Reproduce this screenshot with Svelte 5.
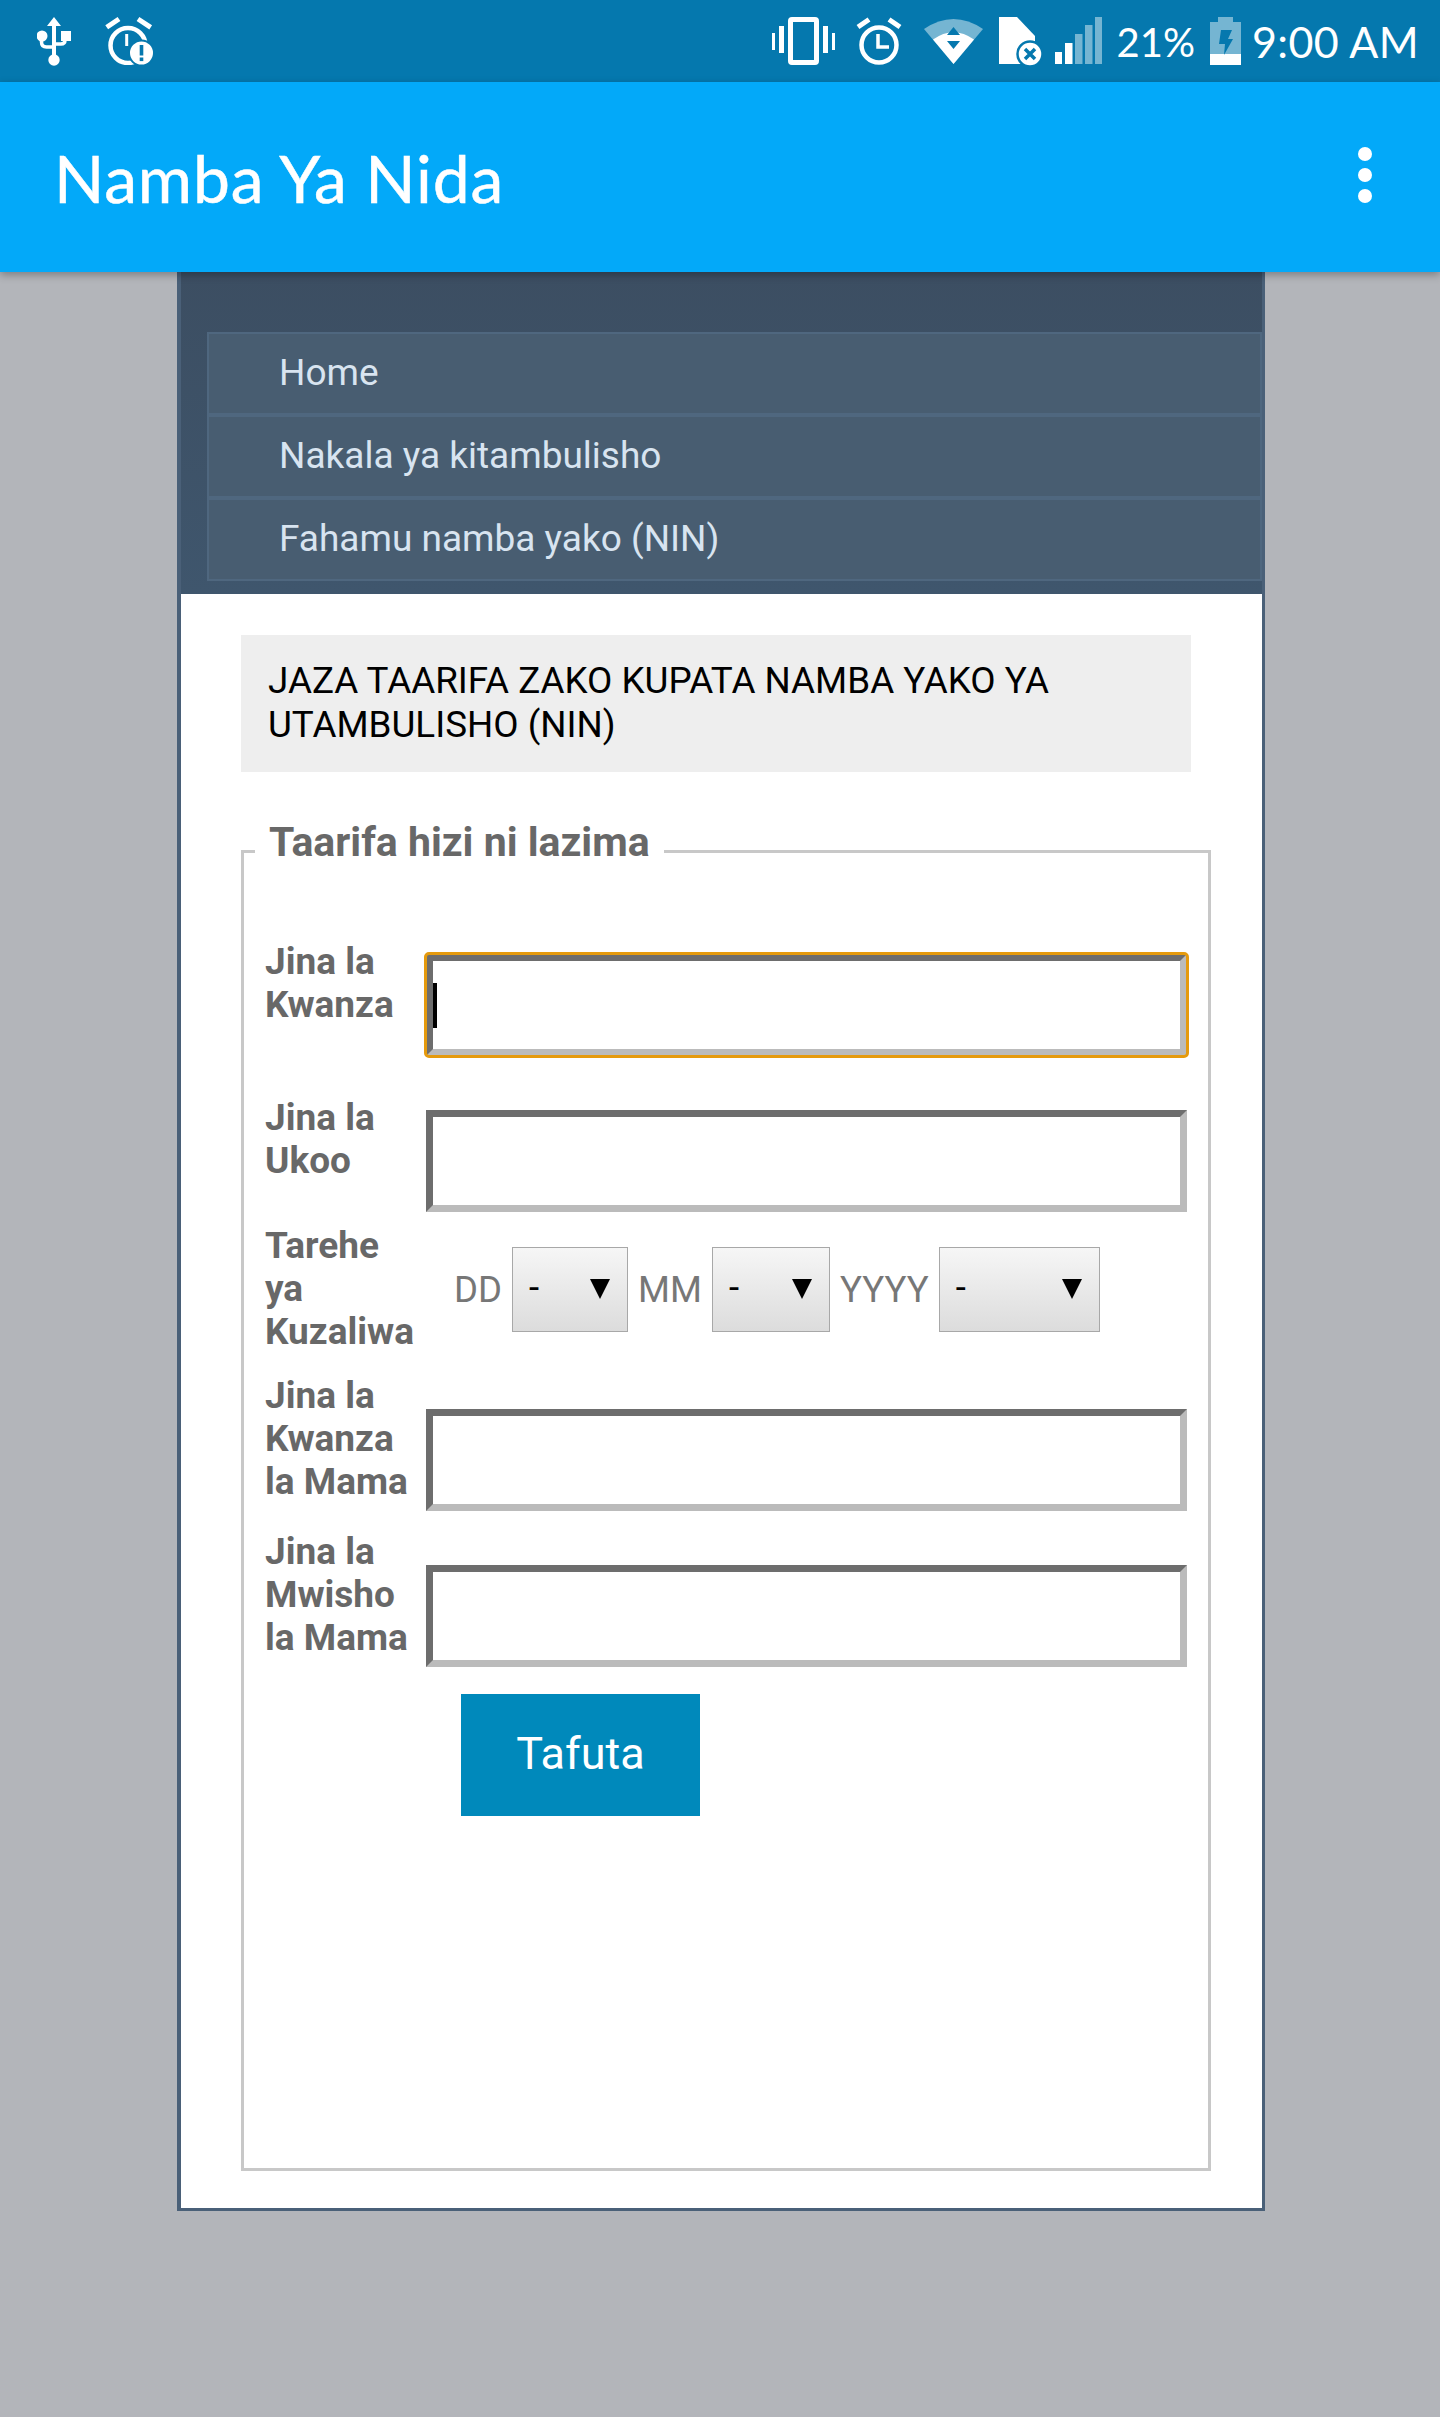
<script>
  const navItems = ["Home", "Nakala ya kitambulisho", "Fahamu namba yako (NIN)"];
  const dateParts = [
    { label: "DD", width: 116 },
    { label: "MM", width: 118 },
    { label: "YYYY", width: 161 }
  ];
</script>

<div class="statusbar">
  <svg class="usb" width="34" height="49" viewBox="0 0 34 49">
    <path d="M17 0l7 9h-5v29h-4V9h-5z" fill="#fff" />
    <path d="M4.5 20v5q0 5 5 5H17M28 24v-1q0 4-4 4h-7" fill="none" stroke="#fff" stroke-width="3.5" />
    <circle cx="5" cy="19" r="5.5" fill="#fff" />
    <rect x="24" y="14" width="10" height="10" fill="#fff" />
    <circle cx="17" cy="43" r="5.7" fill="#fff" />
  </svg>
  <svg class="alarm-alert" width="49" height="49" viewBox="0 0 49 49">
    <path d="M2.700 11.300L15 3M34 3l12.700 8.300" stroke="#fff" stroke-width="5" fill="none" />
    <circle cx="24" cy="29.500" r="17.500" stroke="#fff" stroke-width="4.500" fill="none" />
    <path d="M22.700 18v12" stroke="#fff" stroke-width="3" />
    <circle cx="37.500" cy="37" r="12.500" fill="#fff" stroke="#0578ae" stroke-width="2" />
    <rect x="35.700" y="29" width="3.600" height="10.500" fill="#0578ae" />
    <rect x="35.700" y="41.500" width="3.600" height="3.600" fill="#0578ae" />
  </svg>

  <div class="status-right">
    <svg class="vibrate" width="63" height="48" viewBox="0 0 63 48">
      <rect x="18.500" y="2.500" width="26" height="43" rx="1.500" fill="none" stroke="#fff" stroke-width="5" />
      <path d="M0 16h3v17H0zM7 9h5v27H7zM51 9h5v27h-5zM60 16h3v17h-3z" fill="#fff" />
    </svg>
    <svg class="alarm" width="48" height="48" viewBox="0 0 48 48">
      <path d="M3 10L14 2.500M34 2.500L45 10" stroke="#fff" stroke-width="5" fill="none" />
      <circle cx="24" cy="28" r="17.500" stroke="#fff" stroke-width="4.500" fill="none" />
      <path d="M23 17v13h11" stroke="#fff" stroke-width="3.500" fill="none" />
    </svg>
    <svg class="wifi" width="59" height="47" viewBox="0 0 59 47">
      <path d="M0 12Q29.500-8 59 12L29.500 47z" fill="#fff" opacity=".45" />
      <path d="M9 22.500Q29.500 8 50 22.500L29.500 47z" fill="#fff" />
      <path d="M29.500 10l6.500 8H23zM23 24h13l-6.500 8z" fill="#0578ae" />
    </svg>
    <svg class="sim" width="45" height="49" viewBox="0 0 45 49">
      <path d="M0 0H18L36 19V47H0z" fill="#fff" />
      <circle cx="31" cy="37" r="12.500" fill="#fff" stroke="#0578ae" stroke-width="2.500" />
      <path d="M26 32l10 10M36 32L26 42" stroke="#0578ae" stroke-width="3.500" />
    </svg>
    <svg class="signal" width="47" height="47" viewBox="0 0 47 47">
      <path d="M0 35h7v12H0zM10 26h7.500v21H10z" fill="#fff" />
      <path d="M20 17h7.500v30H20zM30 8h7.500v39H30zM40 0h7v47h-7z" fill="#fff" opacity=".45" />
    </svg>
    <span class="percent">21%</span>
    <svg class="battery" width="31" height="48" viewBox="0 0 31 48">
      <path d="M8 0h15v5h8v32H0V5h8z" fill="#fff" opacity=".45" />
      <path d="M0 37h31v11H0z" fill="#fff" />
      <path d="M11 13h11l-4 9h5l-9 16 1-11H9z" fill="#0578ae" />
    </svg>
    <span class="time">9:00 AM</span>
  </div>
</div>

<header class="appbar">
  <h1>Namba Ya Nida</h1>
  <div class="menu"><i></i><i></i><i></i></div>
</header>

<main class="wrapper">
  <nav>
    {#each navItems as item}
      <a href="#top">{item}</a>
    {/each}
  </nav>

  <div class="content">
    <div class="notice">JAZA TAARIFA ZAKO KUPATA NAMBA YAKO YA UTAMBULISHO (NIN)</div>

    <fieldset>
      <legend>Taarifa hizi ni lazima</legend>
      <div class="form">
        <label for="f1">Jina la Kwanza</label>
        <div class="field">
          <input id="f1" class="focused" type="text" />
          <span class="caret"></span>
        </div>

        <label for="f2">Jina la Ukoo</label>
        <div class="field"><input id="f2" type="text" /></div>

        <label for="d1">Tarehe ya Kuzaliwa</label>
        <div class="date">
          {#each dateParts as part}
            <span>{part.label}</span>
            <div class="select" style="width: {part.width}px">
              -<b></b>
            </div>
          {/each}
        </div>

        <label for="f3">Jina la Kwanza la Mama</label>
        <div class="field tall"><input id="f3" type="text" /></div>

        <label for="f4">Jina la Mwisho la Mama</label>
        <div class="field tall"><input id="f4" type="text" /></div>
      </div>
      <button type="button">Tafuta</button>
    </fieldset>
  </div>
</main>

<style>
  :global(body) {
    background: #b3b5ba;
    font-family: Roboto, "Liberation Sans", sans-serif;
  }

  .statusbar {
    height: 82px;
    background: #0578ae;
    display: flex;
    align-items: flex-start;
    padding: 17px 21px 0 37px;
    box-sizing: border-box;
  }

  .alarm-alert {
    margin-left: 33px;
    margin-top: -1px;
  }

  .status-right {
    margin-left: auto;
    display: flex;
    align-items: flex-start;
    color: #fff;
    font-family: Lato, sans-serif;
    font-size: 43px;
    line-height: 48px;
  }

  .alarm {
    margin-left: 20px;
  }

  .wifi {
    margin-left: 21px;
  }

  .sim {
    margin-left: 16px;
  }

  .signal {
    margin-left: 11px;
  }

  .percent {
    margin-left: 15px;
    margin-top: 1px;
    font-size: 40px;
  }

  .battery {
    margin-left: 15px;
  }

  .time {
    margin-left: 11px;
    margin-top: 1px;
    letter-spacing: 0.4px;
  }

  .appbar {
    position: relative;
    z-index: 2;
    height: 190px;
    background: #03a9f9;
    box-shadow: 0 3px 8px rgba(0, 0, 0, 0.3);
    display: flex;
    align-items: center;
    justify-content: space-between;
    padding: 0 68px 0 54px;
    box-sizing: border-box;
  }

  h1 {
    margin: 2px 0 0;
    color: #fff;
    font-family: Lato, sans-serif;
    font-size: 66px;
    font-weight: 400;
    letter-spacing: 0.8px;
    line-height: 1;
    -webkit-text-stroke: 0.5px #fff;
  }

  .menu {
    display: flex;
    flex-direction: column;
    gap: 7px;
    margin-top: -4px;
  }

  .menu i {
    display: block;
    width: 14px;
    height: 14px;
    border-radius: 50%;
    background: #fff;
  }

  .wrapper {
    width: 1088px;
    margin-left: 177px;
    background: #fff;
    border: solid #4a6078;
    border-width: 0 3px 3px 4px;
    box-sizing: border-box;
  }

  nav {
    background: linear-gradient(#3c4e62, #3f566d);
    padding: 60px 0 13px 26px;
    height: 322px;
    box-sizing: border-box;
    display: flex;
    flex-direction: column;
  }

  nav a {
    height: 83px;
    box-sizing: border-box;
    border: 2px solid #4f677f;
    background: #485d71;
    color: #d8e4f0;
    font-size: 37px;
    line-height: 77px;
    padding-left: 70px;
    text-decoration: none;
  }

  .content {
    padding: 41px 51px 37px 60px;
  }

  .notice {
    width: 950px;
    box-sizing: border-box;
    background: #eee;
    color: #000;
    font-size: 36.8px;
    line-height: 44px;
    padding: 24px 27px 25px;
  }

  fieldset {
    margin: 47px 0 0;
    padding: 0 0 352px 21px;
    border: 3px solid #c8c8c8;
    min-width: 0;
  }

  legend {
    margin-left: -10px;
    padding: 0 14px 17px;
    color: #686868;
    font-size: 41px;
    font-weight: 700;
    line-height: 47px;
  }

  .form {
    margin-top: 57px;
    display: grid;
    grid-template-columns: 161px 761px;
    grid-template-rows: 156px 128px 150px 156px 164px;
  }

  label {
    color: #686868;
    font-size: 37px;
    font-weight: 700;
    line-height: 43px;
    padding-right: 6px;
  }

  .field {
    position: relative;
    padding-top: 14px;
  }

  .field.tall {
    padding-top: 35px;
  }

  input {
    display: block;
    width: 100%;
    height: 102px;
    box-sizing: border-box;
    padding: 0 6px;
    background: #fff;
    border: 7px solid;
    border-color: #6d6d6d #bbb #bbb #6d6d6d;
    border-radius: 0;
  }

  input.focused {
    outline: 3px solid #e59a0d;
    outline-offset: -1px;
    border-radius: 3px;
  }

  .caret {
    position: absolute;
    left: 7px;
    top: 43px;
    width: 4px;
    height: 45px;
    background: #000;
  }

  .date {
    display: flex;
    align-items: flex-start;
    padding-top: 23px;
    padding-left: 28px;
    color: #777;
    font-size: 36.6px;
    line-height: 85px;
  }

  .date span {
    margin-right: 10px;
  }

  .select {
    position: relative;
    height: 85px;
    box-sizing: border-box;
    margin-right: 10px;
    padding-left: 16px;
    border: 1px solid #a8a8a8;
    background: linear-gradient(#f6f6f6, #dcdcdc);
    color: #000;
    line-height: 80px;
  }

  .select b {
    position: absolute;
    right: 17px;
    top: 31px;
    border: solid transparent;
    border-width: 20px 10px 0;
    border-top-color: #000;
  }

  button {
    display: block;
    width: 239px;
    height: 122px;
    margin-left: 196px;
    padding-bottom: 4px;
    border: 0;
    background: #0089bb;
    color: #fff;
    font-family: inherit;
    font-size: 45px;
  }
</style>
